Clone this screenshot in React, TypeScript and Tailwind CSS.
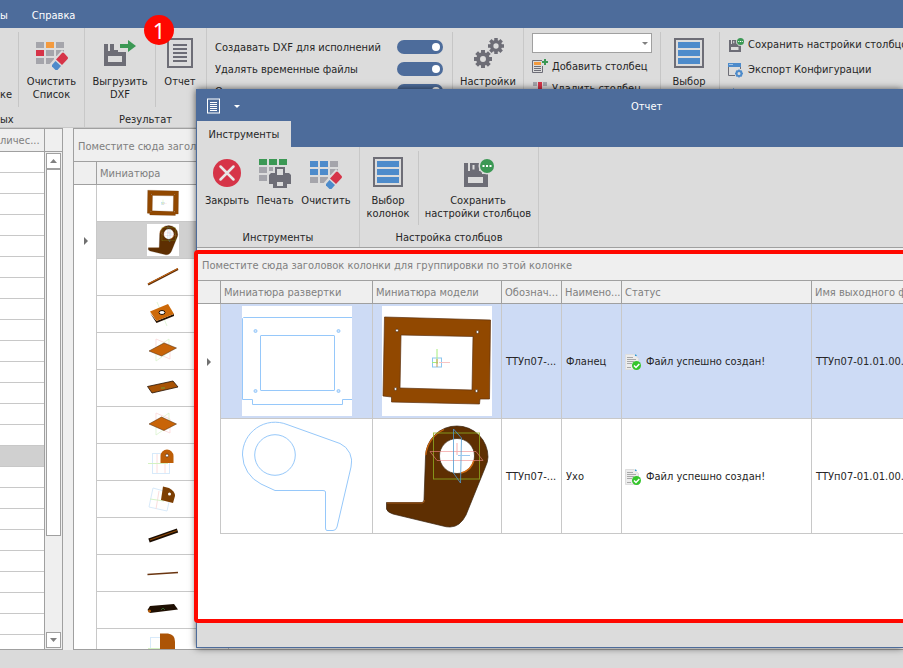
import type { ReactNode } from "react";

/* ---------- icons ---------- */

type IconProps = { className?: string };
const GREY = "#6d6d76";
const RED = "#d63448";
const BLUE = "#4d8bcb";
const GREEN = "#3b9854";
const LIGHT = "#a5a5ab";
const FACE = "#dcdcdc";

function GridEraserIcon({ cells }: { cells: string[] }) {
  return (
    <svg viewBox="0 0 32 32" className="size-8" aria-hidden="true">
      {cells.map((fill, i) => (
        <rect key={i} x={(i % 3) * 10} y={4 + Math.floor(i / 3) * 8} width="8" height="6" fill={fill} />
      ))}
      <path d="M26 12 L35 21 L21 36 L12 28 Z" fill={FACE} />
      <path d="M26 15 q1 -1 2 0 l3.6 4 q.8 1 0 2 l-5.600 6 l-6 -5.500 Z" fill={RED} />
      <path d="M19.500 23 l5.500 5 l-3.500 4 h-2 l-3.500 -3.500 v-1.500 Z" fill={BLUE} />
    </svg>
  );
}

function ExportIcon() {
  return (
    <svg viewBox="0 0 32 32" className="size-8" aria-hidden="true">
      <path d="M0 6h4v7h2V6h4v6h4v2h8v14H0Z M4 18v6h14v-6Z" fill={GREY} fillRule="evenodd" />
      <path d="M16 6h8V2l8 6l-8 6v-4h-8Z" fill={GREEN} />
    </svg>
  );
}

function ReportIcon() {
  return (
    <svg viewBox="0 0 32 32" className="size-8" aria-hidden="true">
      <rect x="4" y="1" width="24" height="28" fill="none" stroke={GREY} strokeWidth="2" />
      <path d="M9 7h14M9 11h14M9 15h14M9 19h14M9 23h14" stroke={GREY} strokeWidth="2" />
    </svg>
  );
}

function ReportMiniIcon() {
  return (
    <svg viewBox="0 0 14 16" className="h-4 w-3.5" aria-hidden="true">
      <rect x="0.500" y="1" width="12" height="14" fill="none" stroke="#fff" />
      <path d="M3 4.500h7M3 6.500h7M3 8.500h7M3 10.500h7M3 12.500h7" stroke="#fff" />
    </svg>
  );
}

function Gear({ cx, cy, r }: { cx: number; cy: number; r: number }) {
  return (
    <g transform={`translate(${cx} ${cy})`}>
      {[0, 45, 90, 135].map((a) => (
        <rect key={a} x={-r * 0.22} y={-r} width={r * 0.44} height={r * 2} fill={GREY} transform={`rotate(${a})`} />
      ))}
      <circle r={r * 0.76} fill={GREY} />
      <circle r={r * 0.33} fill={FACE} />
    </g>
  );
}

function GearsIcon() {
  return (
    <svg viewBox="0 0 32 32" className="size-8" aria-hidden="true">
      <Gear cx={11} cy={21} r={9} />
      <Gear cx={24} cy={8} r={8} />
    </svg>
  );
}

function ColumnsIcon() {
  return (
    <svg viewBox="0 0 32 32" className="size-8" aria-hidden="true">
      <rect x="2" y="1" width="28" height="28" fill="none" stroke={GREY} strokeWidth="2" />
      <path d="M5 4h22v6H5ZM5 12h22v6H5ZM5 20h22v6H5Z" fill={BLUE} />
    </svg>
  );
}

function CloseIcon() {
  return (
    <svg viewBox="0 0 32 32" className="size-8" aria-hidden="true">
      <circle cx="16" cy="16" r="14" fill={RED} />
      <path d="M9.500 9.500l13 13M22.500 9.500l-13 13" stroke="#e8e8e8" strokeWidth="2.500" strokeLinecap="round" />
    </svg>
  );
}

function PrintIcon() {
  return (
    <svg viewBox="0 0 32 32" className="size-8" aria-hidden="true">
      <path d="M0 2h8v6H0ZM10 2h8v6h-8ZM20 2h8v6h-8Z" fill={GREEN} />
      <path d="M0 10h8v6H0ZM10 10h4v4h-4ZM0 18h8v6H0Z" fill={LIGHT} />
      <path d="M12 16h4v3h10v-3h4l2 2v9h-4v4H14v-4h-4v-9Z" fill={GREY} />
      <rect x="17" y="11" width="8" height="8" fill={FACE} stroke={GREY} strokeWidth="2" />
      <rect x="18" y="25" width="6" height="4" fill={FACE} />
    </svg>
  );
}

function SaveDotsIcon({ className = "size-8" }: IconProps) {
  return (
    <svg viewBox="0 0 32 32" className={className} aria-hidden="true">
      <path d="M2 6h4v8h14v3h6v13H2Z M6 20v6h15v-6Z" fill={GREY} fillRule="evenodd" />
      <path d="M8 6h9v8H8Z M10.500 8v4.500h2V8Z" fill={GREY} fillRule="evenodd" />
      <circle cx="25" cy="9" r="8.500" fill={FACE} />
      <circle cx="25" cy="9" r="7" fill={GREEN} />
      <path d="M20.500 8h2v2h-2ZM24 8h2v2h-2ZM27.500 8h2v2h-2Z" fill="#fff" />
    </svg>
  );
}

function AddColumnIcon() {
  return (
    <svg viewBox="0 0 16 16" className="size-4" aria-hidden="true">
      <path d="M10 1.500H0.500v12h10V7" fill="none" stroke={GREY} />
      <rect x="2" y="3" width="7" height="3" fill="#f39a3e" />
      <path d="M2 7.500h7M2 9.500h7M2 11.500h7" stroke={GREY} />
      <path d="M13 0v6M10 3h6" stroke={GREEN} strokeWidth="2" />
    </svg>
  );
}

function RemoveColumnIcon() {
  return (
    <svg viewBox="0 0 16 16" className="size-4" aria-hidden="true">
      <path d="M1 1h4v4H1ZM11 1h4v4h-4Z" fill={LIGHT} />
      <rect x="6" y="1" width="4" height="14" fill={RED} />
    </svg>
  );
}

function ExportConfigIcon() {
  return (
    <svg viewBox="0 0 16 16" className="size-4" aria-hidden="true">
      <path d="M0.500 3v10.500H7M12.500 5v2" fill="none" stroke={GREY} />
      <path d="M0 1h13v4H0Z" fill={BLUE} />
      <path d="M1.500 2.500h1M3.500 2.500h1" stroke="#fff" />
      <circle cx="11" cy="11.500" r="2.500" fill="none" stroke={BLUE} strokeWidth="2" />
      <path d="M11 7.500v1.500M11 14v1.500M7 11.500h1.500M13.500 11.500H15M8.200 8.700l1 1M12.800 13.300l1 1M13.800 8.700l-1 1M9.200 13.300l-1 1" stroke={BLUE} strokeWidth="1.500" />
    </svg>
  );
}

function ImportConfigIcon() {
  return (
    <svg viewBox="0 0 16 16" className="size-4" aria-hidden="true">
      <path d="M5 1l5 4H5Z" fill={BLUE} />
      <path d="M0.500 6.500h12v8h-12Z" fill="none" stroke={GREY} />
    </svg>
  );
}

function FileOkIcon() {
  return (
    <svg viewBox="0 0 16 16" className="size-4 shrink-0" aria-hidden="true">
      <path d="M0.500 0.500H9l4.500 4V15.500H0.500Z" fill="#ececec" stroke="#dedede" />
      <path d="M10 0.500h1l1 1.500h-2Z" fill="#2f9bd6" />
      <path d="M2 3.500h6M2 5.500h9M2 7.500h7M2 9.500h5M2 13.500h4" stroke="#a8a8a8" />
      <circle cx="11.500" cy="11.500" r="4.500" fill="#35c52c" />
      <path d="M9 11.500l2 2l3.300 -3.500" fill="none" stroke="#fff" strokeWidth="1.500" />
    </svg>
  );
}

function Triangle({ dir, className = "" }: { dir: "up" | "down" | "right" | "drop"; className?: string }) {
  const d = { up: "M0 6h7L3.500 2Z", down: "M0 2h7L3.500 6Z", right: "M2 0v8l4-4Z", drop: "M1 3h6L4 6Z" }[dir];
  return (
    <svg viewBox="0 0 7 8" className={`h-2 w-[7px] ${className}`} aria-hidden="true">
      <path d={d} fill="currentColor" />
    </svg>
  );
}

/* ---------- part previews ---------- */

function FramePart({ className = "size-[110px]" }: IconProps) {
  return (
    <svg viewBox="0 0 110 110" className={`bg-white ${className}`} role="img" aria-label="Фланец, модель">
      <path
        d="M2.500 11L108.500 14L107.500 93H98L97.500 98L9.500 96V91L1 90Z M19 29L18 82L90 84L91 30.500Z"
        fill="#914800"
        stroke="#5b3010"
        strokeWidth="0.700"
        fillRule="evenodd"
      />
      {[[15, 24.5], [95.5, 26], [13.5, 83], [94.5, 85]].map(([x, y]) => (
        <circle key={`${x}`} cx={x} cy={y} r="1.400" fill="#fff" stroke="#3d2412" strokeWidth="0.600" />
      ))}
      <rect x="50.500" y="52" width="9" height="9" fill="none" stroke="#8cc6ee" />
      <path d="M55 43v15M50 56.500h6" stroke="#a6ee7c" />
      <path d="M57 56.500h11" stroke="#f8c4c4" />
      <path d="M55 53v8" stroke="#c89a5a" />
    </svg>
  );
}

function FrameOutline() {
  return (
    <svg viewBox="0 0 110 110" className="size-[110px] bg-white" role="img" aria-label="Фланец, развертка">
      <g fill="none" stroke="#96c8fa">
        <path d="M110 11.500H1.500L0.500 12.500V93.500H10.500V98.500H100.500V93.500H110" />
        <rect x="18.500" y="29.500" width="74" height="55" rx="0.500" />
        <g fill="#cfe4fb">
          <circle cx="13.500" cy="25" r="1.500" />
          <circle cx="96.500" cy="25" r="1.500" />
          <circle cx="13.500" cy="85" r="1.500" />
          <circle cx="96.500" cy="85" r="1.500" />
        </g>
      </g>
    </svg>
  );
}

function LugOutline() {
  return (
    <svg viewBox="0 0 110 110" className="size-[110px] bg-white" role="img" aria-label="Ухо, развертка">
      <g fill="none" stroke="#96c8fa">
        <path d="M45 3.500L98 22.500A20 20 0 0 1 109 46L95 106Q94 109.500 91 109.500H85Q83.500 109.500 83.500 107V71Q83.500 69.500 81 69.500H33L19 63A33 33 0 0 1 0.500 34A32.500 32.500 0 0 1 45 3.500Z" />
        <circle cx="33" cy="34" r="20.300" />
      </g>
    </svg>
  );
}

function LugPart({ className = "size-[110px]" }: IconProps) {
  return (
    <svg viewBox="0 0 110 110" className={`bg-white ${className}`} role="img" aria-label="Ухо, модель">
      <path
        d="M43.500 36A31 31 0 0 1 75 5A31 31 0 0 1 106 36Q106 41 103 47L84 94Q78 106 68 106Q64 106 61 105L11 93Q5 91 4.500 88V81.500H40Q42 81 42 79Z M57.500 35A17.500 17.500 0 1 0 92.500 35A17.500 17.500 0 1 0 57.500 35Z"
        fill="#5e2f02"
        stroke="#3a2410"
        strokeWidth="0.700"
        fillRule="evenodd"
      />
      <path d="M43.800 34A31 31 0 0 1 62 8.500" fill="none" stroke="#c8640e" strokeWidth="1.300" />
      <path d="M92 39A17.500 17.500 0 0 1 79 52" fill="none" stroke="#d06a10" strokeWidth="1.500" />
      <path d="M5 82h35q2.500 0 2.500 -3" fill="none" stroke="#b0601c" strokeWidth="0.800" />
      <rect x="51.500" y="12" width="46" height="46" fill="none" stroke="#8fae20" strokeOpacity="0.800" />
      <path d="M48 30.500H94L101 39.500H55Z" fill="none" stroke="#ee8a8a" strokeOpacity="0.600" />
      <path d="M71.500 8L79.500 17L78.500 62L71.500 52Z" fill="none" stroke="#4f9ad0" strokeOpacity="0.800" />
      <path d="M75 22v12" stroke="#f4b0b0" />
      <path d="M76 34.500h12" stroke="#9ac8f0" />
    </svg>
  );
}

function Mini({ children }: { children: ReactNode }) {
  return (
    <svg viewBox="0 0 32 32" className="size-8" aria-hidden="true">
      {children}
    </svg>
  );
}

const axes = (
  <g fill="none" strokeWidth="0.700">
    <path d="M9 4l14 6v14l-14 -6Z" stroke="#fbd3d3" />
    <path d="M22 4L9 13v13l13 -9Z" stroke="#d6f2c8" />
  </g>
);

const miniatures: ReactNode[] = [
  <FramePart className="size-8" />,
  <LugPart className="size-8" />,
  <Mini>
    <path d="M1 23.500L31 8" stroke="#5a2c08" strokeWidth="2" />
    <path d="M1 23L31 7.500" stroke="#cf6a12" strokeWidth="1" />
  </Mini>,
  <Mini>
    <path d="M10 4l10 24" stroke="#d6f2c8" strokeWidth="0.700" />
    <path d="M3 15L9.500 25L27 18V16L9.500 23Z" fill="#241204" />
    <path d="M3 13.500L21 6L27 16L9.500 23Z" fill="#cd6908" />
    <ellipse cx="15" cy="14.500" rx="3" ry="2" fill="#fff" stroke="#241204" />
  </Mini>,
  <Mini>
    {axes}
    <path d="M2 16L17 8L29.500 13L14.500 21Z" fill="#c86408" stroke="#4b2504" strokeWidth="0.500" />
  </Mini>,
  <Mini>
    <path d="M0.500 14.500L26 9L31 15L5 21Z" fill="#a85305" stroke="#241204" strokeWidth="0.800" />
    <path d="M14 16h4" stroke="#58c048" strokeWidth="0.700" />
  </Mini>,
  <Mini>
    {axes}
    <path d="M2 15L14.500 8L29.500 15L17 21.500Z" fill="#c86408" stroke="#4b2504" strokeWidth="0.500" />
  </Mini>,
  <Mini>
    <rect x="5.500" y="7.500" width="17" height="20" fill="none" stroke="#d8eafa" />
    <path d="M10 8v19M18 17v10" stroke="#fbdede" />
    <path d="M1 17.500h20" stroke="#d4f2c2" />
    <path d="M13.500 17V10a6.500 6.500 0 0 1 13 0V17Z" fill="#bd5e07" />
    <circle cx="20" cy="9.500" r="1.500" fill="#fff" stroke="#241204" strokeWidth="0.500" />
  </Mini>,
  <Mini>
    <path d="M6 5l18 5l-4 18l-18 -4Z" fill="none" stroke="#d8eafa" />
    <path d="M12 8l-3 18" stroke="#fbdede" />
    <path d="M3 16l14 2" stroke="#d6f2c8" />
    <path d="M16 3.500L22 5Q28 8 28 13L26 20L14 17Z" fill="#7c3e03" />
    <circle cx="22.500" cy="11" r="1.500" fill="#fff" />
  </Mini>,
  <Mini>
    <path d="M2 20.500L30.500 10.500" stroke="#1a0d03" strokeWidth="4" />
    <path d="M3 20L30 10.500" stroke="#8c4707" strokeWidth="1.300" />
  </Mini>,
  <Mini>
    <path d="M0.500 17.500L31 15.500" stroke="#6a3510" strokeWidth="1.500" />
  </Mini>,
  <Mini>
    <path d="M0.500 16L3 12L27 10L31 15.500L3 19Z" fill="#1e0f02" />
    <circle cx="2.500" cy="17" r="1.500" fill="#b55a08" />
    <path d="M14 16l2 -2l2 2" fill="none" stroke="#3a8040" strokeWidth="0.700" />
  </Mini>,
  <Mini>
    <rect x="3.500" y="6.500" width="17" height="22" fill="none" stroke="#d8eafa" />
    <path d="M1 17.500h20" stroke="#d4f2c2" />
    <path d="M13 2.500h8q7 1 7 8v12H13Z" fill="#ac5406" />
  </Mini>,
];

/* ---------- ribbon pieces ---------- */

function BigButton({ icon, lines, width }: { icon: ReactNode; lines: string[]; width: string }) {
  return (
    <button type="button" className={`flex shrink-0 flex-col items-center pt-2.5 ${width}`}>
      {icon}
      <span className="mt-[5px] flex flex-col whitespace-nowrap text-center leading-[13px]">
        {lines.map((l) => (
          <span key={l}>{l}</span>
        ))}
      </span>
    </button>
  );
}

function SmallButton({ icon, label }: { icon: ReactNode; label: string }) {
  return (
    <button type="button" className="flex items-center gap-1 whitespace-nowrap">
      {icon}
      {label}
    </button>
  );
}

function Group({ label, className = "", children }: { label?: string; className?: string; children: ReactNode }) {
  return (
    <div className={`flex shrink-0 flex-col border-r border-[#c8c8c8] ${className}`}>
      <div className="flex min-h-0 flex-1">{children}</div>
      <div className="h-4 shrink-0 text-center leading-[18px]">{label}</div>
    </div>
  );
}

const Divider = () => <div className="my-1 w-px shrink-0 bg-[#c6c6c6]" />;

function Toggle({ id, label }: { id: string; label: string }) {
  return (
    <div className="flex h-[22px] items-center justify-between">
      <label htmlFor={id} className="pt-0.5">{label}</label>
      <input
        id={id}
        type="checkbox"
        defaultChecked
        className="flex h-3.5 w-[46px] appearance-none items-center rounded-full bg-[#4d6c9b] px-[3px] before:size-2 before:rounded-full before:bg-white checked:justify-end"
      />
    </div>
  );
}

function MainRibbon() {
  return (
    <div className="flex h-[100px] shrink-0 overflow-hidden border-b border-[#c8c8c8] bg-[#dcdcdc]">
      <div className="flex w-[85px] shrink-0 flex-col border-r border-[#c8c8c8]">
        <div className="flex flex-1">
          <button type="button" className="w-[18px] shrink-0 self-start pt-[60px] text-left leading-[13px]">ке</button>
          <Divider />
          <BigButton
            width="w-[65px]"
            lines={["Очистить", "Список"]}
            icon={<GridEraserIcon cells={[LIGHT, "#f39a3e", LIGHT, RED, LIGHT, LIGHT, LIGHT, LIGHT, LIGHT]} />}
          />
        </div>
        <div className="h-4 shrink-0 leading-[18px]">ых</div>
      </div>
      <Group label="Результат" className="w-[122px]">
        <BigButton width="w-[70px]" lines={["Выгрузить", "DXF"]} icon={<ExportIcon />} />
        <Divider />
        <BigButton width="w-12" lines={["Отчет"]} icon={<ReportIcon />} />
      </Group>
      <Group className="w-[317px]">
        <div className="w-[245px] shrink-0 pt-2 pr-[9px] pl-2">
          <Toggle id="t-dxf" label="Создавать DXF для исполнений" />
          <Toggle id="t-tmp" label="Удалять временные файлы" />
          <Toggle id="t-third" label="О" />
        </div>
        <Divider />
        <BigButton width="w-[70px]" lines={["Настройки"]} icon={<GearsIcon />} />
      </Group>
      <div className="flex flex-1 pb-4">
        <div className="flex w-[136px] shrink-0 flex-col gap-1.5 pt-[5px] pr-2 pl-2">
          <div className="relative">
            <select aria-label="Столбец" className="block h-5 w-full appearance-none border border-[#a0a0a0] bg-white" />
            <Triangle dir="drop" className="pointer-events-none absolute top-1.5 right-1 text-[#808080]" />
          </div>
          <SmallButton icon={<AddColumnIcon />} label="Добавить столбец" />
          <SmallButton icon={<RemoveColumnIcon />} label="Удалить столбец" />
        </div>
        <Divider />
        <BigButton width="w-14" lines={["Выбор"]} icon={<ColumnsIcon />} />
        <div className="w-0.5" />
        <Divider />
        <div className="flex flex-col items-start gap-[9px] pt-[9px] pl-2">
          <SmallButton icon={<SaveDotsIcon className="size-4" />} label="Сохранить настройки столбцо" />
          <SmallButton icon={<ExportConfigIcon />} label="Экспорт Конфигурации" />
          <SmallButton icon={<ImportConfigIcon />} label="" />
        </div>
      </div>
    </div>
  );
}

/* ---------- background lists ---------- */

function LeftList() {
  return (
    <section className="flex w-[63px] shrink-0 overflow-hidden border border-l-0 border-[#a0a0a0] bg-white">
      <table className="w-11 shrink-0 table-fixed border-separate border-spacing-0 self-start">
        <thead>
          <tr>
            <th className="h-[23px] border-b border-[#a0a0a0] bg-[#efefef] px-0 pt-0.5 pb-0 text-left font-normal whitespace-nowrap text-[#808080]">
              личес...
            </th>
          </tr>
        </thead>
        <tbody>
          {Array.from({ length: 24 }, (_, i) => (
            <tr key={i} className={i === 14 ? "bg-[#d0d0d0]" : ""}>
              <td className="h-[21px] border-b border-[#c8c8c8] p-0" />
            </tr>
          ))}
        </tbody>
      </table>
      <div className="flex flex-1 flex-col border-l border-[#a0a0a0] bg-[#efefef]">
        <div className="h-[23px] shrink-0 border-b border-[#a0a0a0]" />
        <div className="flex min-h-0 flex-1 flex-col px-px py-px text-[#808080]">
          <button type="button" aria-label="Вверх" className="flex h-4 shrink-0 items-center justify-center border border-[#a0a0a0] bg-white">
            <Triangle dir="up" />
          </button>
          <div className="h-[367px] shrink-0 border border-[#a0a0a0] bg-white" />
          <button type="button" aria-label="Вниз" className="mt-auto flex h-4 shrink-0 items-center justify-center border border-[#a0a0a0] bg-white">
            <Triangle dir="down" />
          </button>
        </div>
      </div>
    </section>
  );
}

function MainList() {
  return (
    <section className="flex min-w-0 flex-1 flex-col overflow-hidden border border-r-0 border-[#a0a0a0] bg-white">
      <div className="flex h-[33px] shrink-0 items-center border-b border-[#a0a0a0] bg-[#efefef] px-1 pt-1 whitespace-nowrap text-[#808080]">
        Поместите сюда заголовок
      </div>
      <table className="w-full table-fixed border-separate border-spacing-0">
        <colgroup>
          <col className="w-[23px]" />
          <col className="w-[132px]" />
          <col />
        </colgroup>
        <thead>
          <tr className="bg-[#efefef]">
            <th className="h-[23px] border-r border-b border-[#a0a0a0] p-0" />
            <th className="border-r border-b border-[#a0a0a0] px-[3px] pt-0.5 pb-0 text-left font-normal text-[#808080]">Миниатюра</th>
            <th className="border-b border-[#a0a0a0] p-0" />
          </tr>
        </thead>
        <tbody>
          {miniatures.map((m, i) => (
            <tr key={i}>
              <td className="h-[37px] border-r border-[#c8c8c8] p-0 text-[#707070]">
                {i === 1 && <Triangle dir="right" className="mx-auto" />}
              </td>
              <td className={`border-r border-b border-[#c8c8c8] p-0 ${i === 1 ? "bg-[#d0d0d0]" : ""}`}>
                <div className="flex justify-center">{m}</div>
              </td>
              <td className={`border-b border-[#c8c8c8] p-0 ${i === 1 ? "bg-[#d0d0d0]" : ""}`} />
            </tr>
          ))}
        </tbody>
      </table>
    </section>
  );
}

/* ---------- report dialog ---------- */

const headers = ["Миниатюра развертки", "Миниатюра модели", "Обознач...", "Наимено...", "Статус", "Имя выходного ф"];

const rows = [
  { flat: <FrameOutline />, model: <FramePart />, name: "Фланец", selected: true },
  { flat: <LugOutline />, model: <LugPart />, name: "Ухо", selected: false },
];

function ReportDialog() {
  const cell = "border-r border-b border-[#c8c8c8] px-1 py-0 whitespace-nowrap overflow-hidden";
  return (
    <div
      role="dialog"
      aria-label="Отчет"
      className="absolute top-[89px] right-0 bottom-5 left-[196px] flex flex-col border border-r-0 border-[#4d6c9b] bg-[#dcdcdc] shadow-[0_0_7px_rgba(0,0,0,0.65)]"
    >
      <header className="flex h-[31px] shrink-0 items-center bg-[#4d6c9b] pl-2.5 text-white">
        <ReportMiniIcon />
        <button type="button" aria-label="Меню" className="ml-3">
          <Triangle dir="drop" />
        </button>
        <h1 className="ml-[391px] pt-0.5">Отчет</h1>
      </header>
      <nav className="flex h-[26px] shrink-0 bg-[#4d6c9b]">
        <button type="button" className="w-[94px] bg-[#dcdcdc] pt-0.5">Инструменты</button>
      </nav>
      <div className="flex h-[101px] shrink-0 border-b border-[#a0a0a0]">
        <Group label="Инструменты" className="w-[163px] pb-0.5">
          <div className="flex pl-1">
            <BigButton width="w-[52px]" lines={["Закрыть"]} icon={<CloseIcon />} />
            <BigButton width="w-11" lines={["Печать"]} icon={<PrintIcon />} />
            <BigButton
              width="w-[58px]"
              lines={["Очистить"]}
              icon={<GridEraserIcon cells={[BLUE, BLUE, LIGHT, BLUE, BLUE, LIGHT, LIGHT, LIGHT, LIGHT]} />}
            />
          </div>
        </Group>
        <Group label="Настройка столбцов" className="w-[179px] pb-0.5">
          <BigButton width="w-14" lines={["Выбор", "колонок"]} icon={<ColumnsIcon />} />
          <div className="w-0.5" />
          <Divider />
          <BigButton width="w-[118px]" lines={["Сохранить", "настройки столбцов"]} icon={<SaveDotsIcon />} />
        </Group>
      </div>
      <div className="flex min-h-0 flex-1 flex-col overflow-hidden bg-white">
        <div className="flex h-[33px] shrink-0 items-center border-b border-[#a0a0a0] bg-[#efefef] pt-1 pl-[5px] whitespace-nowrap text-[#808080]">
          Поместите сюда заголовок колонки для группировки по этой колонке
        </div>
        <table className="w-full table-fixed border-separate border-spacing-0">
          <colgroup>
            <col className="w-6" />
            <col className="w-[152px]" />
            <col className="w-[129px]" />
            <col className="w-[60px]" />
            <col className="w-[60px]" />
            <col className="w-[190px]" />
            <col />
          </colgroup>
          <thead>
            <tr className="bg-[#efefef] text-left text-[#808080]">
              <th className="h-[23px] border-r border-b border-[#a0a0a0] p-0" />
              {headers.map((h) => (
                <th key={h} className="overflow-hidden border-r border-b border-[#a0a0a0] px-[3px] pt-0.5 pb-0 font-normal whitespace-nowrap last:border-r-0">
                  {h}
                </th>
              ))}
            </tr>
          </thead>
          <tbody>
            {rows.map((r) => (
              <tr key={r.name}>
                <td className="h-[115px] border-r border-[#c8c8c8] p-0 text-[#707070]">
                  {r.selected && <Triangle dir="right" className="mx-auto" />}
                </td>
                {[
                  <div className="flex justify-center">{r.flat}</div>,
                  <div className="flex justify-center">{r.model}</div>,
                  <div className="pt-0.5">ТТУп07-...</div>,
                  <div className="pt-0.5">{r.name}</div>,
                  <div className="-ml-px flex items-center gap-[5px] pt-0.5">
                    <FileOkIcon />
                    Файл успешно создан!
                  </div>,
                  <div className="pt-0.5">ТТУп07-01.01.00.</div>,
                ].map((c, i) => (
                  <td key={i} className={`${cell} ${r.selected ? "bg-[#cddbf5]" : ""} last:border-r-0`}>
                    {c}
                  </td>
                ))}
              </tr>
            ))}
          </tbody>
        </table>
      </div>
      <footer className="h-[26px] shrink-0" />
      <div className="pointer-events-none absolute top-40 -right-1 bottom-6 -left-[3px] rounded-sm border-4 border-[#ff0800]" />
    </div>
  );
}

export default function App() {
  return (
    <div className="relative flex h-screen flex-col overflow-hidden bg-[#dadada] font-['DejaVu_Sans_Condensed','DejaVu_Sans',sans-serif] text-[11px] leading-4 text-[#262626]">
      <nav className="flex h-7 shrink-0 items-center gap-6 bg-[#4d6c9b] pt-1 text-white">
        <button type="button">ы</button>
        <button type="button">Справка</button>
      </nav>
      <MainRibbon />
      <main className="flex min-h-0 flex-1 gap-2.5 bg-[#efefef]">
        <LeftList />
        <MainList />
      </main>
      <footer className="h-[18px] shrink-0 bg-[#dadada]" />
      <ReportDialog />
      <div className="absolute top-[15px] left-36 flex size-[30px] items-center justify-center rounded-full bg-[#ff0800] font-['Noto_Sans',sans-serif] text-[22px] text-white">
        1
      </div>
    </div>
  );
}
